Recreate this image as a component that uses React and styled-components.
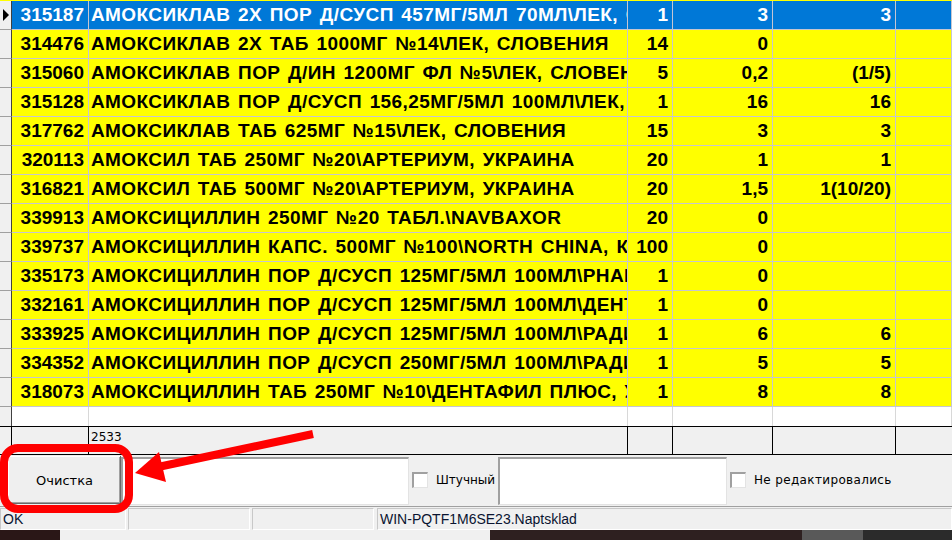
import React from 'react';
import styled, { createGlobalStyle } from 'styled-components';

const GlobalStyle = createGlobalStyle`
  html, body {
    margin: 0;
    padding: 0;
    background: #f0f0f0;
  }
  body {
    width: 952px;
    height: 540px;
    overflow: hidden;
  }
`;

const COLS = '12px 77px 539px 45px 100px 123px 1fr';

const Screen = styled.div`
  position: relative;
  width: 952px;
  height: 540px;
  display: flex;
  flex-direction: column;
  background: #f0f0f0;
  overflow: hidden;
`;

// Grid
const Grid = styled.div`
  display: grid;
  grid-template-columns: ${COLS};
  grid-auto-rows: 29px;
  border-top: 1px solid #ffff00;
  font-family: "Liberation Sans", Arial, sans-serif;
`;

const Indicator = styled.div`
  box-sizing: border-box;
  background: #f0f0f0;
  border-right: 1px solid #404040;
  border-bottom: 1px solid #a0a0a0;
  display: flex;
  align-items: center;
  padding-left: 3px;
`;

const Cell = styled.div`
  box-sizing: border-box;
  background: ${p => (p.$selected ? '#0078d7' : '#ffff00')};
  color: ${p => (p.$selected ? '#ffffff' : '#000000')};
  border-right: 1px solid #c6c6d0;
  border-bottom: 1px solid #c6c6d0;
  font-weight: bold;
  font-size: 19px;
  letter-spacing: ${p => (p.$wide ? '0.4px' : '0')};
  word-spacing: ${p => (p.$wide ? '2px' : '0')};
  display: flex;
  align-items: center;
  justify-content: ${p => (p.$right ? 'flex-end' : 'flex-start')};
  padding: ${p => (p.$right ? '0 4px 0 0' : '0 0 0 2px')};
  white-space: nowrap;
  overflow: hidden;
`;

const Arrow = styled.span`
  width: 0;
  height: 0;
  border-top: 6px solid transparent;
  border-bottom: 6px solid transparent;
  border-left: 6px solid #000;
`;

const EmptyRow = styled.div`
  display: grid;
  grid-template-columns: ${COLS};
  height: 19px;
  background: #fff;
`;

const EmptyCell = styled.div`
  border-right: 1px solid ${p => (p.$first ? '#404040' : '#d8d8d8')};
  background: ${p => (p.$first ? '#f0f0f0' : '#fff')};
`;

const FooterRow = styled.div`
  box-sizing: border-box;
  display: grid;
  grid-template-columns: ${COLS};
  height: 29px;
  border-top: 1px solid #000;
  border-bottom: 1px solid #000;
  background: #f0f0f0;
  font-family: "DejaVu Sans", Tahoma, sans-serif;
  font-size: 12px;
`;

const FooterCell = styled.div`
  border-right: 1px solid #000;
  padding: 3px 0 0 2px;
  &:last-child { border-right: none; }
`;

// Bottom panel
const Panel = styled.div`
  display: flex;
  align-items: flex-start;
  height: 51px;
  padding-left: 8px;
  font-family: "DejaVu Sans", Tahoma, sans-serif;
  font-size: 12px;
  color: #000;
`;

const Button = styled.button`
  box-sizing: border-box;
  width: 113px;
  height: 48px;
  margin-top: 1px;
  background: #efefef;
  border: none;
  box-shadow: inset -1px -1px 0 #696969, inset 1px 1px 0 #ffffff, inset -2px -2px 0 #a0a0a0;
  font-family: inherit;
  font-size: 13px;
  color: #000;
  padding: 0;
`;

const TextBox = styled.div`
  box-sizing: border-box;
  width: ${p => p.$w}px;
  height: 48px;
  margin-top: 2px;
  background: #fff;
  border-top: 2px solid #a0a0a0;
  border-left: 2px solid #a0a0a0;
  border-right: 1px solid #e3e3e3;
  border-bottom: 1px solid #e3e3e3;
`;

const CheckGroup = styled.label`
  display: flex;
  align-items: center;
  width: ${p => p.$w}px;
  height: 50px;
  padding-left: 3px;
  box-sizing: border-box;
  gap: 8px;
  white-space: nowrap;
  letter-spacing: ${p => p.$ls || 0}px;
`;

const Box = styled.span`
  box-sizing: border-box;
  width: 16px;
  height: 16px;
  background: #fff;
  border-top: 2px solid #a0a0a0;
  border-left: 2px solid #a0a0a0;
  border-right: 1px solid #e3e3e3;
  border-bottom: 1px solid #e3e3e3;
`;

// Status bar
const StatusBar = styled.div`
  box-sizing: border-box;
  display: flex;
  gap: 2px;
  height: 24px;
  border-top: 1px solid #a0a0a0;
  padding-top: 1px;
  font-family: "Liberation Sans", Arial, sans-serif;
  font-size: 14px;
  color: #0a1430;
`;

const StatusPanel = styled.div`
  box-sizing: border-box;
  width: ${p => (p.$w ? `${p.$w}px` : 'auto')};
  flex: ${p => (p.$w ? 'none' : '1')};
  margin-left: ${p => p.$ml || 0}px;
  border: 1px solid;
  border-color: #c8c8c8 #ffffff #ffffff #c8c8c8;
  padding: 2px 0 0 2px;
  white-space: nowrap;
  overflow: hidden;
`;

const Taskbar = styled.div`
  display: flex;
  height: 10px;
`;

const Seg = styled.div`
  width: ${p => (p.$w ? `${p.$w}px` : 'auto')};
  flex: ${p => (p.$w ? 'none' : '1')};
  background: ${p => p.$c};
`;

const Overlay = styled.svg`
  position: absolute;
  left: 0;
  top: 0;
  pointer-events: none;
`;

const rows = [
  ['315187', 'АМОКСИКЛАВ 2Х ПОР Д/СУСП 457МГ/5МЛ 70МЛ\\ЛЕК, СЛОВЕНИЯ', '1', '3', '3'],
  ['314476', 'АМОКСИКЛАВ 2Х ТАБ 1000МГ №14\\ЛЕК, СЛОВЕНИЯ', '14', '0', ''],
  ['315060', 'АМОКСИКЛАВ ПОР Д/ИН 1200МГ ФЛ №5\\ЛЕК, СЛОВЕНИЯ', '5', '0,2', '(1/5)'],
  ['315128', 'АМОКСИКЛАВ ПОР Д/СУСП 156,25МГ/5МЛ 100МЛ\\ЛЕК, СЛОВЕНИЯ', '1', '16', '16'],
  ['317762', 'АМОКСИКЛАВ ТАБ 625МГ №15\\ЛЕК, СЛОВЕНИЯ', '15', '3', '3'],
  ['320113', 'АМОКСИЛ ТАБ 250МГ №20\\АРТЕРИУМ, УКРАИНА', '20', '1', '1'],
  ['316821', 'АМОКСИЛ ТАБ 500МГ №20\\АРТЕРИУМ, УКРАИНА', '20', '1,5', '1(10/20)'],
  ['339913', 'АМОКСИЦИЛЛИН 250МГ №20 ТАБЛ.\\NAVBAXOR', '20', '0', ''],
  ['339737', 'АМОКСИЦИЛЛИН КАПС. 500МГ №100\\NORTH CHINA, КИТАЙ', '100', '0', ''],
  ['335173', 'АМОКСИЦИЛЛИН ПОР Д/СУСП 125МГ/5МЛ 100МЛ\\PHARMA', '1', '0', ''],
  ['332161', 'АМОКСИЦИЛЛИН ПОР Д/СУСП 125МГ/5МЛ 100МЛ\\ДЕНТАФИЛ ПЛЮС', '1', '0', ''],
  ['333925', 'АМОКСИЦИЛЛИН ПОР Д/СУСП 125МГ/5МЛ 100МЛ\\РАДИКС, УЗБЕКИСТАН', '1', '6', '6'],
  ['334352', 'АМОКСИЦИЛЛИН ПОР Д/СУСП 250МГ/5МЛ 100МЛ\\РАДИКС, УЗБЕКИСТАН', '1', '5', '5'],
  ['318073', 'АМОКСИЦИЛЛИН ТАБ 250МГ №10\\ДЕНТАФИЛ ПЛЮС, УЗБЕКИСТАН', '1', '8', '8'],
];

const App = () => (
  <Screen>
    <GlobalStyle />
    <Grid>
      {rows.map((r, i) => {
        const sel = i === 0;
        return (
          <React.Fragment key={r[0]}>
            <Indicator>{sel && <Arrow />}</Indicator>
            <Cell $selected={sel} $right>{r[0]}</Cell>
            <Cell $selected={sel} $wide>{r[1]}</Cell>
            <Cell $selected={sel} $right>{r[2]}</Cell>
            <Cell $selected={sel} $right>{r[3]}</Cell>
            <Cell $selected={sel} $right>{r[4]}</Cell>
            <Cell $selected={sel} />
          </React.Fragment>
        );
      })}
    </Grid>
    <EmptyRow>
      <EmptyCell $first />
      <EmptyCell />
      <EmptyCell />
      <EmptyCell />
      <EmptyCell />
      <EmptyCell />
      <EmptyCell />
    </EmptyRow>
    <FooterRow>
      <FooterCell />
      <FooterCell />
      <FooterCell>2533</FooterCell>
      <FooterCell />
      <FooterCell />
      <FooterCell />
      <FooterCell />
    </FooterRow>
    <Panel>
      <Button>Очистка</Button>
      <TextBox $w={288} />
      <CheckGroup $w={89}>
        <Box />
        Штучный
      </CheckGroup>
      <TextBox $w={229} />
      <CheckGroup $w={220} $ls={0.35}>
        <Box />
        Не редактировались
      </CheckGroup>
    </Panel>
    <StatusBar>
      <StatusPanel $w={126}>OK</StatusPanel>
      <StatusPanel $w={122} />
      <StatusPanel $w={122} />
      <StatusPanel $ml={1}>WIN-PQTF1M6SE23.Naptsklad</StatusPanel>
    </StatusBar>
    <Taskbar>
      <Seg $w={60} $c="#2a1717" />
      <Seg $w={430} $c="#f0f0f0" />
      <Seg $w={312} $c="#2e2020" />
      <Seg $w={61} $c="#595959" />
      <Seg $c="#2b2b2b" />
    </Taskbar>
    <Overlay width="952" height="540" viewBox="0 0 952 540">
      <rect x="4" y="448" width="125" height="61" rx="14" fill="none" stroke="#ff0000" strokeWidth="8" />
      <line x1="313" y1="434" x2="158" y2="467" stroke="#ff0000" strokeWidth="8" />
      <polygon points="135,473 159,452 166,482" fill="#ff0000" />
    </Overlay>
  </Screen>
);

export default App;
